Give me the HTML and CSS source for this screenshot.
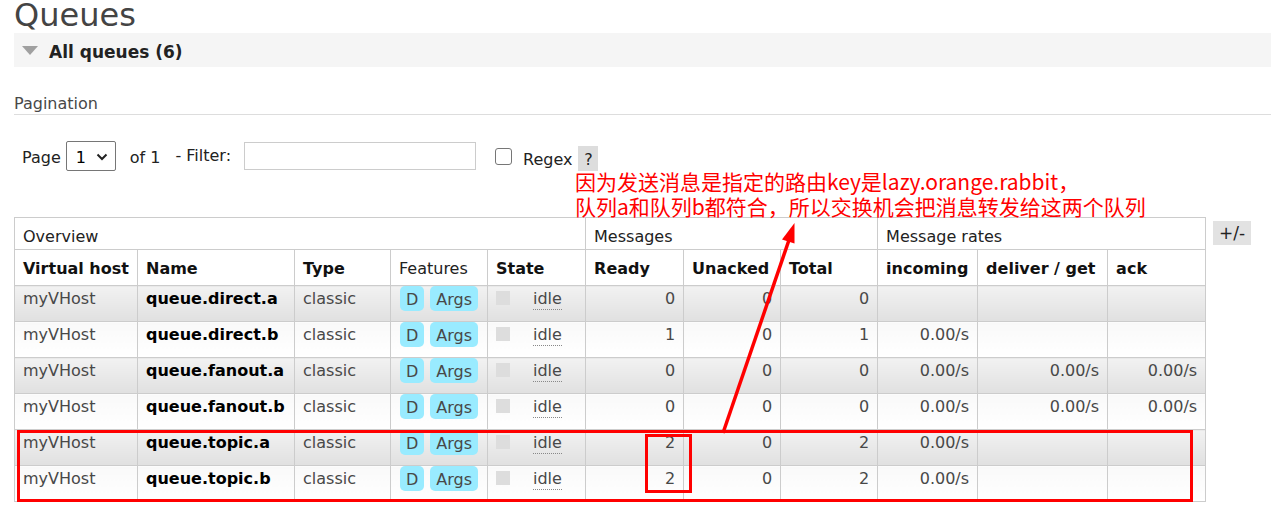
FILE: index.html
```html
<!DOCTYPE html>
<html>
<head>
<meta charset="utf-8">
<link rel="stylesheet" href="styles.css">
</head>
<body>
<div class="page">
  <h1 class="title">Queues</h1>
  <div class="section-bar">
    <svg class="tri" width="16" height="9" viewBox="0 0 16 9"><path d="M0 0 H16 L8 9 Z" fill="#a0a0a0"/></svg>
    <span class="section-title">All queues (6)</span>
  </div>
  <div class="pag-head">Pagination</div>
  <div class="pag-row">
    <span class="lbl">Page</span>
    <div class="select"><span>1</span><svg width="12" height="8" viewBox="0 0 12 8"><path d="M1.5 1.5 L6 6 L10.5 1.5" fill="none" stroke="#222" stroke-width="2"/></svg></div>
    <span class="lbl of">of 1</span>
    <span class="lbl filter">- Filter:</span>
    <div class="input"></div>
    <div class="checkbox"></div>
    <span class="lbl regex">Regex</span>
    <span class="help">?</span>
  </div>
  <div class="table-wrap">
    <table class="list">
      <colgroup>
        <col style="width:123px"><col style="width:157px"><col style="width:96px"><col style="width:97px"><col style="width:98px"><col style="width:98px"><col style="width:97px"><col style="width:97px"><col style="width:100px"><col style="width:130px"><col style="width:98px">
      </colgroup>
      <thead>
        <tr class="group">
          <th colspan="5">Overview</th>
          <th colspan="3">Messages</th>
          <th colspan="3">Message rates</th>
        </tr>
        <tr class="cols">
          <th>Virtual host</th><th>Name</th><th>Type</th><th class="normal">Features</th><th>State</th>
          <th>Ready</th><th>Unacked</th><th>Total</th><th>incoming</th><th>deliver / get</th><th>ack</th>
        </tr>
      </thead>
      <tbody>
        <tr class="alt1">
          <td>myVHost</td><td class="name">queue.direct.a</td><td>classic</td>
          <td class="feat"><div class="badges"><span class="badge">D</span><span class="badge">Args</span></div></td>
          <td><div class="state"><span class="sq"></span><span class="idle">idle</span></div></td>
          <td class="r">0</td><td class="r">0</td><td class="r">0</td><td class="r"></td><td class="r"></td><td class="r"></td>
        </tr>
        <tr class="alt2">
          <td>myVHost</td><td class="name">queue.direct.b</td><td>classic</td>
          <td class="feat"><div class="badges"><span class="badge">D</span><span class="badge">Args</span></div></td>
          <td><div class="state"><span class="sq"></span><span class="idle">idle</span></div></td>
          <td class="r">1</td><td class="r">0</td><td class="r">1</td><td class="r">0.00/s</td><td class="r"></td><td class="r"></td>
        </tr>
        <tr class="alt1">
          <td>myVHost</td><td class="name">queue.fanout.a</td><td>classic</td>
          <td class="feat"><div class="badges"><span class="badge">D</span><span class="badge">Args</span></div></td>
          <td><div class="state"><span class="sq"></span><span class="idle">idle</span></div></td>
          <td class="r">0</td><td class="r">0</td><td class="r">0</td><td class="r">0.00/s</td><td class="r">0.00/s</td><td class="r">0.00/s</td>
        </tr>
        <tr class="alt2">
          <td>myVHost</td><td class="name">queue.fanout.b</td><td>classic</td>
          <td class="feat"><div class="badges"><span class="badge">D</span><span class="badge">Args</span></div></td>
          <td><div class="state"><span class="sq"></span><span class="idle">idle</span></div></td>
          <td class="r">0</td><td class="r">0</td><td class="r">0</td><td class="r">0.00/s</td><td class="r">0.00/s</td><td class="r">0.00/s</td>
        </tr>
        <tr class="alt1">
          <td>myVHost</td><td class="name">queue.topic.a</td><td>classic</td>
          <td class="feat"><div class="badges"><span class="badge">D</span><span class="badge">Args</span></div></td>
          <td><div class="state"><span class="sq"></span><span class="idle">idle</span></div></td>
          <td class="r">2</td><td class="r">0</td><td class="r">2</td><td class="r">0.00/s</td><td class="r"></td><td class="r"></td>
        </tr>
        <tr class="alt2">
          <td>myVHost</td><td class="name">queue.topic.b</td><td>classic</td>
          <td class="feat"><div class="badges"><span class="badge">D</span><span class="badge">Args</span></div></td>
          <td><div class="state"><span class="sq"></span><span class="idle">idle</span></div></td>
          <td class="r">2</td><td class="r">0</td><td class="r">2</td><td class="r">0.00/s</td><td class="r"></td><td class="r"></td>
        </tr>
      </tbody>
    </table>
    <span class="plusminus">+/-</span>
  </div>
</div>

<div class="note">因为发送消息是指定的路由key是lazy.orange.rabbit，<br>队列a和队列b都符合，所以交换机会把消息转发给这两个队列</div>
<svg class="marks" width="1271" height="520" viewBox="0 0 1271 520">
  <rect x="18.5" y="431.5" width="1173" height="69" fill="none" stroke="#f00" stroke-width="3"/>
  <rect x="646.5" y="435.5" width="44" height="56" fill="none" stroke="#f00" stroke-width="3"/>
  <line x1="723" y1="433" x2="789" y2="240" stroke="#f00" stroke-width="3.5"/>
  <polygon points="794.5,223 794.5,243.5 782,239.5" fill="#f00"/>
</svg>
</body>
</html>
```
FILE: styles.css
```css
html, body {
  margin: 0;
  padding: 0;
  background: #fff;
}
body {
  position: relative;
  width: 1271px;
  height: 520px;
  overflow: hidden;
  font-family: "DejaVu Sans", Verdana, sans-serif;
  font-size: 16px;
  color: #484848;
}
.page {
  padding-left: 14px;
}
.title {
  margin: 0;
  font-size: 32px;
  line-height: 30px;
  font-weight: normal;
  color: #444;
}
.section-bar {
  margin-top: 3px;
  height: 34px;
  background: #f5f5f5;
  display: flex;
  align-items: center;
  padding-left: 8px;
}
.tri {
  display: block;
  margin-top: 1px;
}
.section-title {
  margin-left: 11px;
  margin-top: 3px;
  font-weight: bold;
  font-size: 17px;
  color: #222;
}
.pag-head {
  margin-top: 27px;
  line-height: 20px;
  border-bottom: 1px solid #ddd;
}
.pag-row {
  margin-top: 26px;
  height: 30px;
  display: flex;
  align-items: center;
  padding-left: 8px;
  color: #222;
}
.lbl {
  line-height: 20px;
  margin-top: 4px;
}
.select {
  margin-left: 5px;
  width: 50px;
  height: 30px;
  box-sizing: border-box;
  border: 1px solid #767676;
  border-radius: 2px;
  display: flex;
  align-items: center;
  padding-left: 9px;
  padding-top: 2px;
  gap: 10px;
  color: #000;
}
.of {
  margin-left: 14px;
}
.filter {
  margin-left: 15px;
  margin-top: 0;
}
.input {
  margin-left: 13px;
  width: 232px;
  height: 28px;
  box-sizing: border-box;
  border: 1px solid #ccc;
}
.checkbox {
  margin-left: 19px;
  width: 17px;
  height: 17px;
  box-sizing: border-box;
  border: 1px solid #767676;
  border-radius: 3px;
  margin-top: 0;
}
.regex {
  margin-left: 11px;
  margin-top: 8px;
}
.help {
  margin-left: 6px;
  width: 20px;
  height: 25px;
  margin-top: 4px;
  background: #ddd;
  text-align: center;
  line-height: 28px;
}
.table-wrap {
  margin-top: 46px;
  display: flex;
  align-items: flex-start;
  gap: 7px;
}
table.list {
  border-collapse: collapse;
  table-layout: fixed;
  width: 1191px;
}
table.list th,
table.list td {
  border: 1px solid #ccc;
  padding: 0 8px;
  text-align: left;
  vertical-align: top;
  line-height: 20px;
  white-space: nowrap;
  overflow: hidden;
}
table.list tr.group {
  height: 32px;
}
table.list tr.group th {
  font-weight: normal;
  color: #222;
  padding-top: 9px;
}
table.list tr.cols {
  height: 36px;
}
table.list tr.cols th {
  font-weight: bold;
  color: #111;
  padding-top: 9px;
}
table.list tr.cols th.normal {
  font-weight: normal;
  color: #222;
}
table.list tbody tr {
  height: 36px;
}
table.list tbody td {
  padding-top: 3px;
}
table.list tr.alt1 td {
  background: linear-gradient(#f2f2f2, #e0e0e0);
}
table.list tr.alt2 td {
  background: linear-gradient(#f9f9f9, #ffffff);
}
table.list td.name {
  font-weight: bold;
  color: #000;
}
table.list td.r {
  text-align: right;
}
table.list td.feat {
  padding-top: 0;
  padding-left: 9px;
}
.badges {
  display: flex;
  gap: 6px;
}
.badge {
  display: block;
  height: 25px;
  line-height: 27px;
  padding: 0 6px;
  border-radius: 5px;
  background: #99ebff;
  color: #484848;
}
.state {
  display: flex;
  align-items: flex-start;
}
.sq {
  display: block;
  width: 14px;
  height: 14px;
  margin-top: 2px;
  margin-right: 23px;
  background: #ddd;
}
.idle {
  border-bottom: 1px dotted #888;
  line-height: 20px;
}
.plusminus {
  margin-top: 4px;
  width: 38px;
  height: 24px;
  line-height: 24px;
  text-align: center;
  background: #e2e2e2;
  color: #222;
  font-size: 17px;
}
.note {
  position: absolute;
  left: 575px;
  top: 169px;
  font-family: "Noto Sans CJK SC", "Noto Sans", sans-serif;
  font-size: 21px;
  line-height: 25px;
  color: #f00;
  white-space: nowrap;
}
.marks {
  position: absolute;
  left: 0;
  top: 0;
  pointer-events: none;
}
```
